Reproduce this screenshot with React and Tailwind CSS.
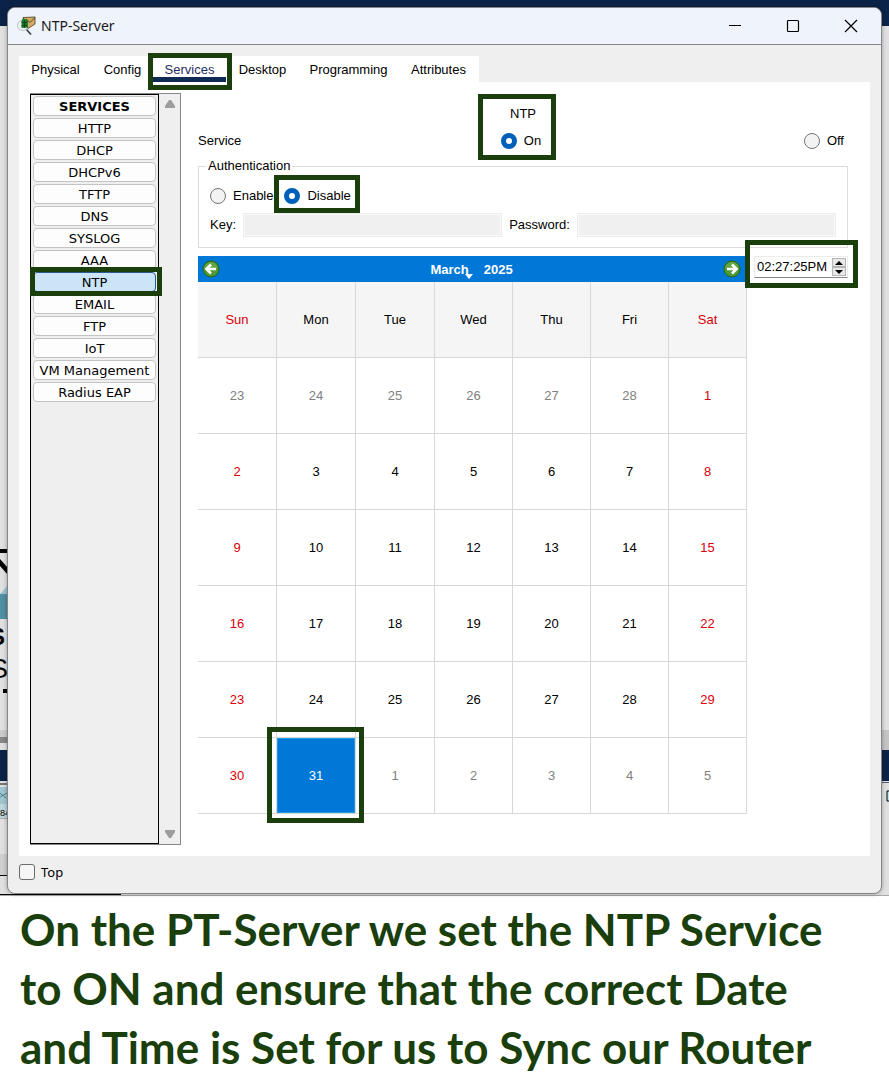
import React, { useState } from "react";

const SERVICES = ["HTTP", "DHCP", "DHCPv6", "TFTP", "DNS", "SYSLOG", "AAA", "NTP", "EMAIL", "FTP", "IoT", "VM Management", "Radius EAP"];
const TABS = ["Physical", "Config", "Services", "Desktop", "Programming", "Attributes"];
const TAB_WIDTHS = ["w-[73px]", "w-[61px]", "w-[73px]", "w-[73px]", "w-[99px]", "w-[81px]"];
const DAYS = ["Sun", "Mon", "Tue", "Wed", "Thu", "Fri", "Sat"];
const WEEKS = [
  [23, 24, 25, 26, 27, 28, 1],
  [2, 3, 4, 5, 6, 7, 8],
  [9, 10, 11, 12, 13, 14, 15],
  [16, 17, 18, 19, 20, 21, 22],
  [23, 24, 25, 26, 27, 28, 29],
  [30, 31, 1, 2, 3, 4, 5],
];

function Mark({ className }) {
  return <span aria-hidden="true" className={`pointer-events-none absolute z-10 border-5 border-[#1a3f0c] ${className}`} />;
}

function Radio({ label, name, checked, onChange }) {
  return (
    <label className="flex items-center gap-[7px]">
      <input
        type="radio"
        name={name}
        checked={checked}
        onChange={onChange}
        className="size-4 appearance-none rounded-full border border-[#757575] bg-[#f3f3f3] checked:border-5 checked:border-[#005fb8] checked:bg-white"
      />
      {label}
    </label>
  );
}

function Arrow({ back }) {
  return (
    <svg viewBox="0 0 18 18" className="size-[18px]">
      <circle cx="9" cy="9" r="8.5" fill="#2d6b25" />
      <circle cx="9" cy="9" r="7.3" fill="#4e9a35" />
      <path d="M2 9a7 7 0 0 1 14 0z" fill="#6fb04f" opacity=".6" />
      <path
        d={back ? "M14 9H5M9 4.5 4.5 9 9 13.5" : "M4 9h9M9 4.5 13.5 9 9 13.5"}
        fill="none"
        stroke="#fff"
        strokeWidth="2.6"
      />
    </svg>
  );
}

function AppIcon() {
  return (
    <svg viewBox="0 0 20 20" className="size-5">
      <circle cx="5.500" cy="9.500" r="5" fill="#eef1f1" stroke="#b9bfc0" />
      <path d="M6 1.500 18 1v7l-7 4.500z" fill="#d2ad62" stroke="#4a3a1c" strokeWidth=".8" />
      <path d="m9 3 4 3.500L18 1.500" fill="none" stroke="#4a3a1c" strokeWidth=".9" />
      <path d="M4.500 5 6 2l5 2.500v7L4.500 12z" fill="#1c7a2c" />
      <path d="M4.500 6.500H10M4.500 9.500H10M7.500 4v8" stroke="#0b3d14" strokeWidth=".8" />
      <path d="m9.500 13.500 4.500 5" stroke="#3d4242" strokeWidth="1.800" />
    </svg>
  );
}

function LeftBackdrop() {
  return (
    <svg className="absolute left-0 top-0 h-[896px] w-[121px]" viewBox="0 0 121 896" aria-hidden="true">
      <path d="M0 549h8v4H0z" />
      <path d="m0 559 8 9v7l-8-9z" />
      <path d="m0 594 8-9v9z" fill="#9dc3cf" />
      <path d="M0 594h8v25H0z" fill="#4f8fa3" />
      <text x="-11" y="645" fontSize="24" fontWeight="bold" fontFamily="Liberation Sans">S</text>
      <text x="-10" y="678" fontSize="27" fontFamily="Liberation Sans">S</text>
      <path d="M3 689h5v4H3z" />
      <path d="M0 730h8v7H0z" fill="#cbcbcb" />
      <path d="M0 737h8v6H0z" fill="#868686" />
      <path d="M0 750h8v31H0z" fill="#0c2348" />
      <path d="M0 783h8v2H0z" fill="#777" />
      <path d="M0 787h8v17H0z" fill="#9fc5cf" />
      <path d="m0 797 7-4M0 793l6 5" stroke="#4f8190" />
      <path d="M0 804h8v14H0z" fill="#bdd5dc" />
      <text x="0" y="816" fontSize="9" fontFamily="Liberation Sans">84</text>
      <path d="M0 818h8v1H0z" fill="#aaa" />
      <path d="M0 854h8v21H0z" fill="#cfcfcf" />
      <path d="M0 875h8v1H0zM0 894h121v1H0z" />
    </svg>
  );
}

function RightBackdrop() {
  return (
    <svg className="absolute right-0 top-0 h-[896px] w-[8px]" viewBox="0 0 8 896" aria-hidden="true">
      <path d="M0 730h8v20H0z" fill="#c4c4c4" />
      <path d="M0 750h8v31H0z" fill="#0c2348" />
      <path d="M0 782h8v1H0z" fill="#55606b" />
      <path d="M9 791H6v10h3" fill="#bfe3ea" stroke="#000" />
    </svg>
  );
}

export default function App() {
  const [auth, setAuth] = useState("Disable");
  const [service, setService] = useState("On");
  return (
    <div className="min-h-screen bg-white font-['Liberation_Sans',Arial,sans-serif] text-[13px] leading-4 text-black">
      <div className="relative border-b border-[#a9a9ad] bg-linear-to-b from-[#0c2348] from-[26px] to-[#e0e0e0] to-[26px] px-[7px] pb-px pt-[7px]">
        <LeftBackdrop />
        <RightBackdrop />
        <section className="relative overflow-hidden rounded-lg border border-[#85868a] bg-[#efefef] shadow-[0_0_4px_#0005]">
          <header className="-mx-px -mt-px flex h-[38px] items-center border-b border-[#85868a] bg-[#eff3fb] pl-[10px] pr-6">
            <AppIcon />
            <h1 className="ml-1 flex-1 font-['Noto_Sans',sans-serif] text-[14px] text-[#1a1a1a]">NTP-Server</h1>
            <div className="flex gap-[44px]">
              <button aria-label="Minimize"><svg viewBox="0 0 14 14" className="size-[14px]"><path d="M1 6.500h12" stroke="#000" /></svg></button>
              <button aria-label="Maximize"><svg viewBox="0 0 14 14" className="size-[14px]"><rect x="1.500" y="1.500" width="11" height="11" rx="1" fill="none" stroke="#000" strokeWidth="1.200" /></svg></button>
              <button aria-label="Close"><svg viewBox="0 0 14 14" className="size-[14px]"><path d="m1 1 12 12M13 1 1 13" stroke="#000" strokeWidth="1.200" /></svg></button>
            </div>
          </header>

          <div className="pl-[11px] pr-[11px] pt-[11px]">
            <nav className="flex h-[26px] w-fit bg-white">
              {TABS.map((tab, i) => (
                <div key={tab} className={`relative flex ${TAB_WIDTHS[i]}`}>
                  <button className={`flex-1 text-center ${tab === "Services" ? "border-b-5 border-[#0f2a55] pt-[6px] text-[#1f2f5f]" : "pb-px pt-[3px]"}`}>
                    {tab}
                  </button>
                  {tab === "Services" && <Mark className="-bottom-2 -left-[5px] -right-[6px] -top-[3px]" />}
                </div>
              ))}
            </nav>

            <main className="flex bg-white pb-[11px] pl-[11px] pr-[22px] pt-[11px]">
              <aside className="flex h-[752px] w-[151px] shrink-0 border border-l-0 border-[#85868a] bg-[#efefef]">
                <ul className="flex w-[129px] flex-col gap-[2px] border border-black px-[2px] pt-px font-['DejaVu_Sans',Verdana,sans-serif]">
                  <li className="h-5 rounded-[4px] border border-[#c4c4c4] bg-[#fdfdfd] text-center font-bold leading-5">SERVICES</li>
                  {SERVICES.map((s) => (
                    <li key={s} className="relative flex">
                      <button className={`h-5 flex-1 rounded-[4px] border text-center leading-5 ${s === "NTP" ? "border-[#2a5b94] bg-[#cce4f7]" : "border-[#c4c4c4] bg-[#fdfdfd]"}`}>
                        {s}
                      </button>
                      {s === "NTP" && <Mark className="-bottom-1 -left-[3px] -right-[6px] -top-[5px]" />}
                    </li>
                  ))}
                </ul>
                <div className="flex flex-1 flex-col items-center justify-between py-[6px]">
                  <svg viewBox="0 0 10 8" className="h-2 w-[10px]"><path d="M4 0h2l4 6v2H0V6z" fill="#9d9d9d" /></svg>
                  <svg viewBox="0 0 10 8" className="h-2 w-[10px]"><path d="M4 8h2l4-6V0H0v2z" fill="#9d9d9d" /></svg>
                </div>
              </aside>

              <div className="ml-[17px] min-w-0 flex-1">
                <div className="pt-[13px] text-center">NTP</div>
                <div className="mt-[11px] grid grid-cols-3 items-center pr-1">
                  <span>Service</span>
                  <div className="flex justify-center">
                    <div className="relative">
                      <Radio label="On" name="service" checked={service === "On"} onChange={() => setService("On")} />
                      <Mark className="-bottom-[11px] -left-[23px] -right-[15px] -top-[39px]" />
                    </div>
                  </div>
                  <div className="flex justify-end">
                    <Radio label="Off" name="service" checked={service === "Off"} onChange={() => setService("Off")} />
                  </div>
                </div>

                <fieldset className="mt-[9px] border border-[#dcdcdc] px-[11px] pb-[10px]">
                  <legend className="-ml-1 px-[2px]">Authentication</legend>
                  <div className="mt-[14px] flex gap-[11px]">
                    <Radio label="Enable" name="auth" checked={auth === "Enable"} onChange={() => setAuth("Enable")} />
                    <div className="relative">
                      <Radio label="Disable" name="auth" checked={auth === "Disable"} onChange={() => setAuth("Disable")} />
                      <Mark className="-bottom-[9px] -left-[10px] -right-[9px] -top-[13px]" />
                    </div>
                  </div>
                  <div className="mt-[9px] flex items-center gap-[7px]">
                    <label htmlFor="key">Key:</label>
                    <input id="key" disabled className="h-6 min-w-0 flex-1 border border-[#ececec] bg-[#f0f0f0] shadow-[inset_0_0_0_1px_#fafafa]" />
                    <label htmlFor="password">Password:</label>
                    <input id="password" type="password" disabled className="h-6 min-w-0 flex-1 border border-[#ececec] bg-[#f0f0f0] shadow-[inset_0_0_0_1px_#fafafa]" />
                  </div>
                </fieldset>

                <div className="mt-2 flex items-start gap-[7px]">
                  <div className="flex-1">
                    <div className="flex h-[26px] items-center justify-between bg-[#0078d7] pl-1 pr-[6px] font-bold text-white">
                      <button aria-label="Previous month"><Arrow back /></button>
                      <div className="flex gap-[15px] pt-px">
                        <button className="relative">
                          March
                          <svg viewBox="0 0 8 5" className="absolute -bottom-px -right-1 h-[5px] w-2"><path d="M0 0h8L4 5z" fill="#fff" /></svg>
                        </button>
                        <button>2025</button>
                      </div>
                      <button aria-label="Next month"><Arrow /></button>
                    </div>
                    <table className="w-full table-fixed border-separate border-spacing-0">
                      <colgroup>
                        <col className="w-[79px]" />
                        <col className="w-[79px]" />
                        <col className="w-[79px]" />
                        <col span={4} />
                      </colgroup>
                      <thead>
                        <tr>
                          {DAYS.map((d, i) => (
                            <th key={d} className={`h-[76px] border-b border-r border-[#d8d8d8] bg-[#f5f5f5] p-0 text-center font-normal ${i % 6 === 0 ? "text-[#d8000c]" : ""}`}>{d}</th>
                          ))}
                        </tr>
                      </thead>
                      <tbody>
                        {WEEKS.map((week, w) => (
                          <tr key={w}>
                            {week.map((day, i) => {
                              const outside = (w === 0 && day > 20) || (w === 5 && day < 10);
                              const selected = w === 5 && day === 31;
                              const color = selected
                                ? "bg-[#0078d7] text-white border border-[#1c9be6]"
                                : outside
                                ? "text-[#808080]"
                                : i % 6 === 0
                                ? "text-[#d8000c]"
                                : "text-black";
                              return (
                                <td key={i} className="relative border-b border-r border-[#d8d8d8] p-0">
                                  <button className={`block h-[75px] w-full ${color}`}>{day}</button>
                                  {selected && <Mark className="-bottom-[10px] -left-[10px] -right-[9px] -top-[11px]" />}
                                </td>
                              );
                            })}
                          </tr>
                        ))}
                      </tbody>
                    </table>
                  </div>
                  <div className="relative flex h-[22px] w-[94px] items-center border border-b-[#858585] border-[#ececec] pl-[2px] pr-px">
                    <input aria-label="Time" defaultValue="02:27:25PM" className="min-w-0 flex-1 bg-transparent" />
                    <div className="flex w-[14px] flex-col">
                      <button aria-label="Later" className="flex h-[9px] items-center justify-center border border-[#b5b5b5] bg-[#e8e8e8]">
                        <svg viewBox="0 0 8 4" className="h-1 w-2"><path d="M4 0 8 4H0z" /></svg>
                      </button>
                      <button aria-label="Earlier" className="flex h-[9px] items-center justify-center border border-[#b5b5b5] bg-[#e8e8e8]">
                        <svg viewBox="0 0 8 4" className="h-1 w-2"><path d="m4 4 4-4H0z" /></svg>
                      </button>
                    </div>
                    <Mark className="-bottom-[11px] -left-[10px] -right-[11px] -top-[17px]" />
                  </div>
                </div>
              </div>
            </main>
          </div>

          <footer className="flex h-[37px] px-[11px] pt-2 font-['Noto_Sans',sans-serif]">
            <label className="flex h-4 items-center gap-[6px]">
              <input type="checkbox" className="size-4 appearance-none rounded-[3px] border border-[#6b6b6b] bg-[#f6f6f6] checked:bg-[#005fb8]" />
              Top
            </label>
          </footer>
        </section>
      </div>

      <p className="px-5 pt-1 font-['Lato',Calibri,sans-serif] text-[44px] font-bold leading-[59px] text-[#1a3f0c]">
        On the PT-Server we set the NTP Service
        <br />
        to ON and ensure that the correct Date
        <br />
        and Time is Set for us to Sync our Router
      </p>
    </div>
  );
}
